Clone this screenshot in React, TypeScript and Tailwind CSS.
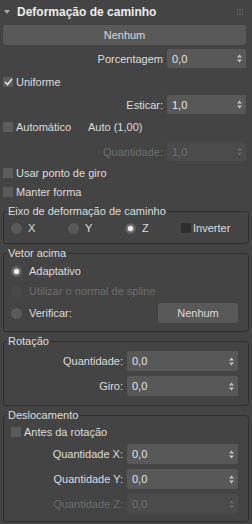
import React from 'react';

const Arrows = ({ disabled }: { disabled?: boolean }) => (
    <svg width="5" height="9" viewBox="0 0 5 9" className={disabled ? 'fill-[#6a6a6a]' : 'fill-[#c4c4c4]'}>
        <path d="M2.5 0.5 L5 3.5 L0 3.5 Z" />
        <path d="M0 5.5 L5 5.5 L2.5 8.5 Z" />
    </svg>
);

const Spinner = ({ value, wide, disabled }: { value: string; wide?: boolean; disabled?: boolean }) => (
    <div
        className={`flex items-center justify-between pl-[5px] pr-[4px] rounded-[2px] ${
            wide ? 'w-[111px] h-[20px]' : 'w-[79px] h-[19px]'
        } ${disabled ? 'bg-[#4b4b4b] text-[#707070]' : 'bg-[#585858] text-[#e4e4e4]'}`}
    >
        <span>{value}</span>
        <Arrows disabled={disabled} />
    </div>
);

const Check = ({ checked, dark }: { checked?: boolean; dark?: boolean }) => (
    <div className={`w-[10px] h-[10px] shrink-0 flex items-center justify-center ${dark ? 'bg-[#2e2e2e]' : 'bg-[#5c5c5c]'}`}>
        {checked && (
            <svg width="9" height="8" viewBox="0 0 9 8">
                <path d="M1 4 L3.5 6.5 L8 1" stroke="#e6e6e6" strokeWidth="1.6" fill="none" />
            </svg>
        )}
    </div>
);

const Radio = ({ on, disabled }: { on?: boolean; disabled?: boolean }) => (
    <div
        className={`w-[11px] h-[11px] rounded-full shrink-0 flex items-center justify-center ${
            disabled ? 'bg-[#4a4a4a]' : 'bg-[#5a5a5a]'
        }`}
    >
        {on && <div className="w-[5px] h-[5px] rounded-full bg-[#f2f2f2] shadow-[0_0_2px_1px_rgba(255,255,255,0.35)]" />}
    </div>
);

const Group = ({ title, className, children }: { title: string; className: string; children: React.ReactNode }) => (
    <div className={`mx-[3px] border border-[#2f2f2f] rounded-[3px] ${className}`}>
        <div className="-mt-[7px] ml-[3px] px-[1px] w-fit h-[13px] leading-[13px] bg-[#444444] text-[#dedede]">{title}</div>
        {children}
    </div>
);

const LabeledSpin = ({ label, value, wide, disabled, className }: { label: string; value: string; wide?: boolean; disabled?: boolean; className: string }) => (
    <div className={`flex items-center justify-end gap-[4px] ${className}`}>
        <span className={disabled ? 'text-[#6e6e6e]' : 'text-[#dedede]'}>{label}</span>
        <Spinner value={value} wide={wide} disabled={disabled} />
    </div>
);

const App = () => {
    return (
        <div
            className="w-[252px] h-[524px] overflow-hidden bg-[#444444] text-[11px] leading-[14px] text-[#dedede]"
            style={{ fontFamily: '"Liberation Sans", Arial, sans-serif' }}
        >
            {/* Header */}
            <div className="h-[24px] flex items-center pl-[4px] pr-[9px]">
                <svg width="6" height="4" viewBox="0 0 6 4" className="fill-[#a8a8a8]">
                    <path d="M0 0 L6 0 L3 4 Z" />
                </svg>
                <span className="ml-[7px] text-[12px] font-bold text-[#ececec]">Deformação de caminho</span>
                <svg width="6" height="6" viewBox="0 0 6 6" className="ml-auto fill-[#7a7a7a]">
                    <rect x="0" y="0" width="1" height="1" />
                    <rect x="2.5" y="0" width="1" height="1" />
                    <rect x="5" y="0" width="1" height="1" />
                    <rect x="0" y="2.5" width="1" height="1" />
                    <rect x="2.5" y="2.5" width="1" height="1" />
                    <rect x="5" y="2.5" width="1" height="1" />
                    <rect x="0" y="5" width="1" height="1" />
                    <rect x="2.5" y="5" width="1" height="1" />
                    <rect x="5" y="5" width="1" height="1" />
                </svg>
            </div>

            <div className="mt-[1px] ml-[3px] mr-[6px] h-[20px] rounded-[3px] bg-[#595959] flex items-center justify-center text-[#dadada]">
                Nenhum
            </div>

            <div className="pr-[6px]">
                <LabeledSpin label="Porcentagem" value="0,0" className="mt-[4px]" />
            </div>

            <div className="mt-[7px] h-[14px] pl-[3px] flex items-center gap-[3px]">
                <Check checked />
                <span>Uniforme</span>
            </div>

            <div className="pr-[6px]">
                <LabeledSpin label="Esticar:" value="1,0" className="mt-[6px]" />
            </div>

            <div className="mt-[6px] h-[14px] pl-[3px] flex items-center gap-[3px]">
                <Check />
                <span className="w-[69px]">Automático</span>
                <span>Auto (1,00)</span>
            </div>

            <div className="pr-[6px]">
                <LabeledSpin label="Quantidade:" value="1,0" disabled className="mt-[8px]" />
            </div>

            <div className="mt-[5px] h-[14px] pl-[3px] flex items-center gap-[3px]">
                <Check />
                <span>Usar ponto de giro</span>
            </div>

            <div className="mt-[5px] h-[14px] pl-[3px] flex items-center gap-[3px]">
                <Check />
                <span>Manter forma</span>
            </div>

            <Group title="Eixo de deformação de caminho" className="mt-[12px] h-[33px]">
                <div className="mt-[3px] h-[14px] pl-[7px] grid grid-cols-[57px_57px_56px_1fr] items-center">
                    <div className="flex items-center gap-[6px]">
                        <Radio />
                        <span>X</span>
                    </div>
                    <div className="flex items-center gap-[6px]">
                        <Radio />
                        <span>Y</span>
                    </div>
                    <div className="flex items-center gap-[6px]">
                        <Radio on />
                        <span>Z</span>
                    </div>
                    <div className="flex items-center gap-[2px]">
                        <Check dark />
                        <span>Inverter</span>
                    </div>
                </div>
            </Group>

            <Group title="Vetor acima" className="mt-[9px] h-[79px]">
                <div className="mt-[4px] h-[14px] pl-[7px] flex items-center gap-[7px]">
                    <Radio on />
                    <span>Adaptativo</span>
                </div>
                <div className="mt-[6px] h-[14px] pl-[7px] flex items-center gap-[7px]">
                    <Radio disabled />
                    <span className="text-[#6e6e6e]">Utilizar o normal de spline</span>
                </div>
                <div className="mt-[5px] h-[20px] pl-[7px] pr-[10px] flex items-center gap-[7px]">
                    <Radio />
                    <span>Verificar:</span>
                    <div className="ml-auto w-[80px] h-[20px] rounded-[3px] bg-[#595959] flex items-center justify-center text-[#dadada]">
                        Nenhum
                    </div>
                </div>
            </Group>

            <Group title="Rotação" className="mt-[9px] h-[65px]">
                <div className="pr-[10px]">
                    <LabeledSpin label="Quantidade:" value="0,0" wide className="mt-[3px]" />
                    <LabeledSpin label="Giro:" value="0,0" wide className="mt-[5px]" />
                </div>
            </Group>

            <Group title="Deslocamento" className="mt-[9px] h-[107px]">
                <div className="mt-[3px] h-[14px] pl-[7px] flex items-center gap-[3px]">
                    <Check />
                    <span>Antes da rotação</span>
                </div>
                <div className="pr-[10px]">
                    <LabeledSpin label="Quantidade X:" value="0,0" wide className="mt-[5px]" />
                    <LabeledSpin label="Quantidade Y:" value="0,0" wide className="mt-[5px]" />
                    <LabeledSpin label="Quantidade Z:" value="0,0" wide disabled className="mt-[5px]" />
                </div>
            </Group>
        </div>
    );
};

export default App;
